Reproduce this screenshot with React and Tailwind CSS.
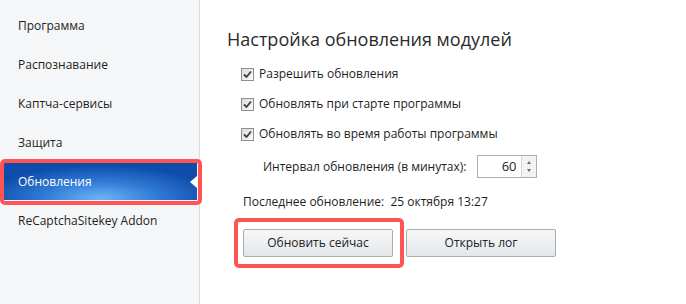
import React from 'react';

const menu = ['Программа', 'Распознавание', 'Каптча-сервисы', 'Защита', 'Обновления', 'ReCaptchaSitekey Addon'];

function Check() {
    return (
        <span className="w-[13px] h-[13px] border border-[#8e8f8f] bg-gradient-to-br from-[#dcdcdc] to-[#fbfbfb] flex items-center justify-center shrink-0">
            <svg width="9" height="9" viewBox="0 0 9 9">
                <path d="M1 4.5 L3.5 7 L8 1.5" fill="none" stroke="#3c3c3c" strokeWidth="1.8" />
            </svg>
        </span>
    );
}

export default function App() {
    const options = ['Разрешить обновления', 'Обновлять при старте программы', 'Обновлять во время работы программы'];

    return (
        <div className="w-[686px] h-[304px] flex bg-white text-[#1e1e1e] font-['Open_Sans',sans-serif] overflow-hidden">
            {/* Sidebar */}
            <div className="w-[200px] h-full bg-[#f5f6f7] border-r border-[#dadcde] pt-[6px] shrink-0">
                {menu.map((item) => (
                    item === 'Обновления' ? (
                        <div key={item} className="relative h-[39px] flex items-center">
                            <div className="h-[37px] ml-[4px] w-[193px] flex items-center pl-[14px] text-white text-[12px] bg-[radial-gradient(ellipse_60%_90%_at_50%_95%,#6cb4f6_0%,#2f7ad5_50%,#0d4ca9_100%)] relative">
                                {item}
                                <span className="absolute right-0 top-[13px] w-0 h-0 border-y-[6px] border-y-transparent border-r-[7px] border-r-white"></span>
                            </div>
                            <span className="absolute left-[0px] top-[-3px] w-[202px] h-[46px] border-[4px] border-[#ff5454] rounded-[5px]"></span>
                        </div>
                    ) : (
                        <div key={item} className="h-[39px] flex items-center pl-[18px] text-[12px]">
                            {item}
                        </div>
                    )
                ))}
            </div>

            {/* Content */}
            <div className="flex-1 pl-[27px] pt-[25px]">
                <h1 className="text-[18px] leading-[28px] text-[#2a2a2a] font-normal">Настройка обновления модулей</h1>

                <div className="mt-[13px] ml-[14px] flex flex-col gap-[14px]">
                    {options.map((o) => (
                        <label key={o} className="flex items-center gap-[5px] text-[12px] h-[16px]">
                            <Check />
                            <span>{o}</span>
                        </label>
                    ))}
                </div>

                <div className="mt-[13px] ml-[36px] flex items-center gap-[10px] text-[12px]">
                    <span>Интервал обновления (в минутах):</span>
                    <div className="w-[60px] h-[23px] border border-[#abadb3] flex bg-white">
                        <span className="flex-1 text-right pr-[4px] leading-[21px] text-[13px]">60</span>
                        <div className="w-[15px] border-l border-[#d6d6d6] bg-[#f3f3f3] flex flex-col items-center justify-center gap-[5px]">
                            <span className="w-0 h-0 border-x-[2.5px] border-x-transparent border-b-[3px] border-b-[#6d6d6d]"></span>
                            <span className="w-0 h-0 border-x-[2.5px] border-x-transparent border-t-[3px] border-t-[#6d6d6d]"></span>
                        </div>
                    </div>
                </div>

                <div className="mt-[15px] ml-[16px] text-[12px]">
                    Последнее обновление:&nbsp; 25 октября 13:27
                </div>

                <div className="mt-[18px] ml-[16px] flex gap-[13px]">
                    <div className="relative">
                        <button className="w-[150px] h-[28px] border border-[#acacac] rounded-[2px] bg-gradient-to-b from-[#f6f7f8] to-[#e4e7ea] text-[12px] text-[#222]">
                            Обновить сейчас
                        </button>
                        <span className="absolute -left-[9px] -top-[11px] w-[170px] h-[50px] border-[4px] border-[#ff5454] rounded-[5px]"></span>
                    </div>
                    <button className="w-[150px] h-[28px] border border-[#acacac] rounded-[2px] bg-gradient-to-b from-[#f6f7f8] to-[#e4e7ea] text-[12px] text-[#222]">
                        Открыть лог
                    </button>
                </div>
            </div>
        </div>
    );
}
